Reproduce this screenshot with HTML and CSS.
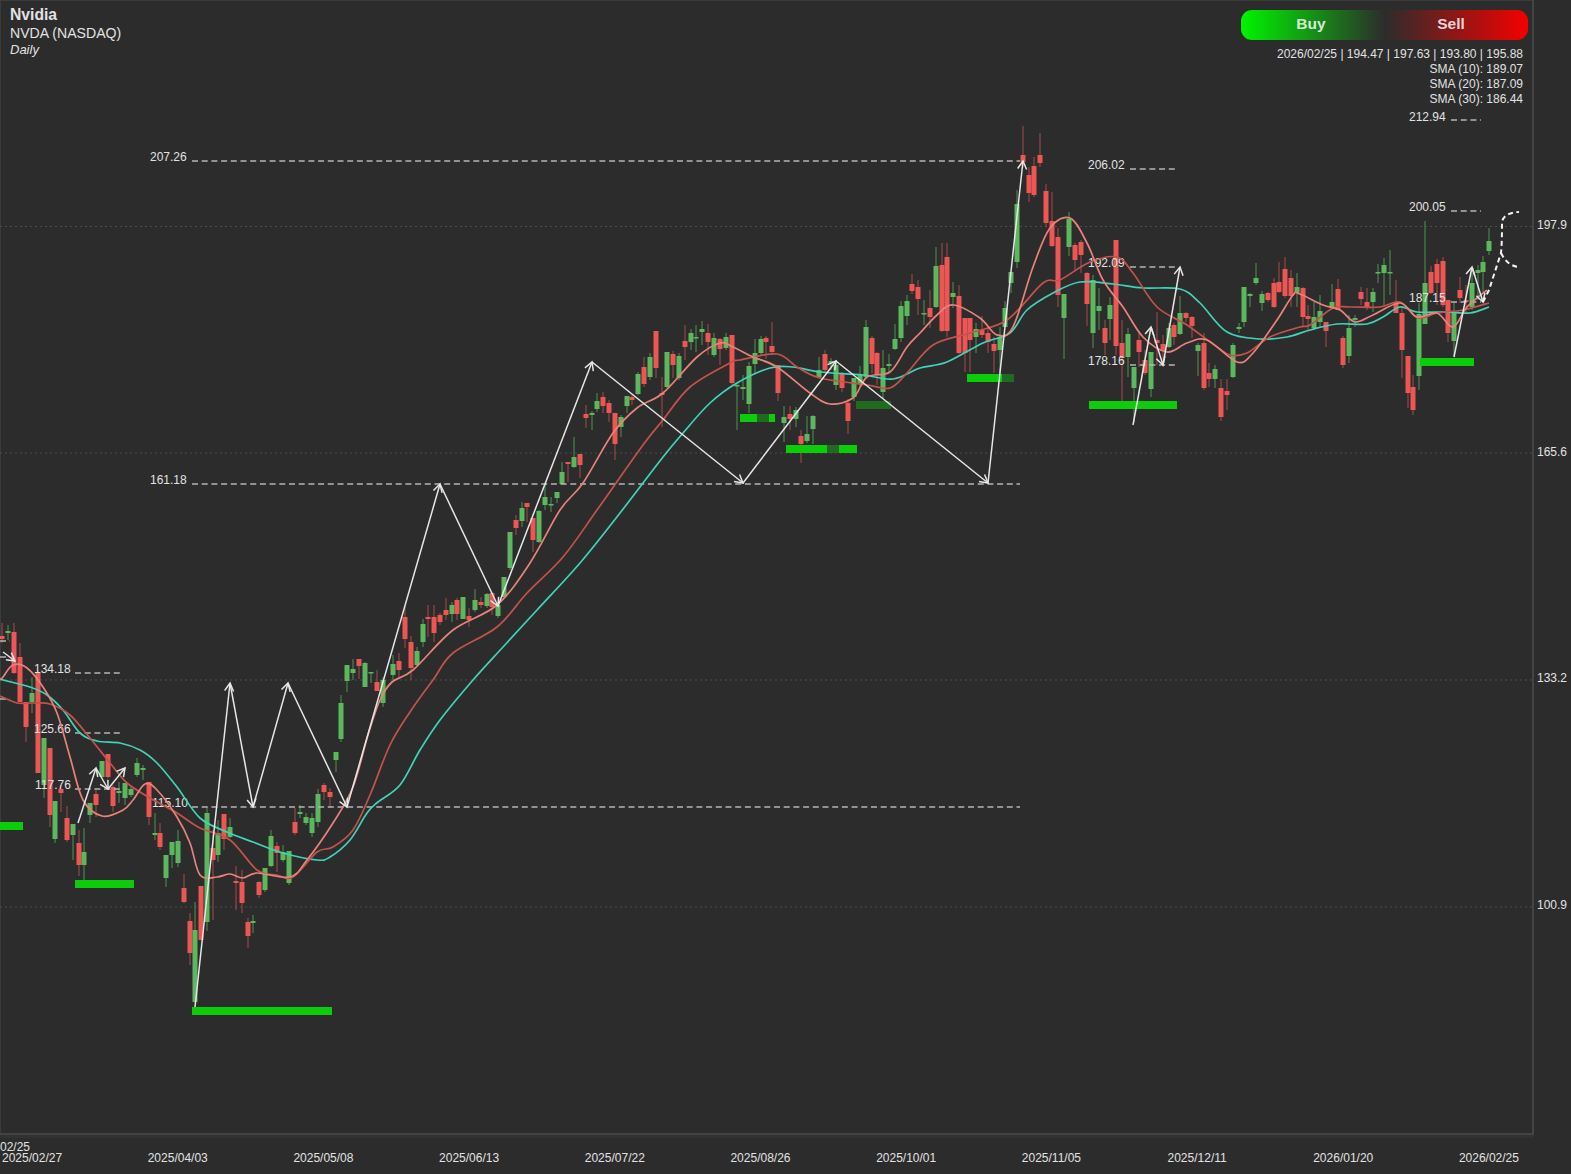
FILE: index.html
```html
<!DOCTYPE html>
<html lang="en">
<head>
<meta charset="utf-8">
<title>Nvidia NVDA Daily</title>
<link rel="stylesheet" href="styles.css">
</head>
<body>
<div class="chart">
  <div class="plot">
    <svg class="canvas" width="1532" height="1133" viewBox="0 0 1532 1133">
      <defs>
        <marker id="head" markerUnits="userSpaceOnUse" markerWidth="14" markerHeight="14" viewBox="-11 -7 14 14" refX="0" refY="0" orient="auto">
          <path class="head" d="M-8 -4.5L0 0L-8 4.5"/>
        </marker>
      </defs>
      <g id="grid">
        <line class="gridline" x1="0" x2="1532" y1="226.5" y2="226.5"/>
        <line class="gridline" x1="0" x2="1532" y1="453" y2="453"/>
        <line class="gridline" x1="0" x2="1532" y1="680" y2="680"/>
        <line class="gridline" x1="0" x2="1532" y1="907" y2="907"/>
      </g>
      <g id="candles"></g>
      <g id="zones">
        <rect class="zone" x="0" y="822" width="23" height="8"/>
        <rect class="zone" x="75" y="880" width="59" height="8"/>
        <rect class="zone" x="192" y="1007" width="140" height="8"/>
        <rect class="zone" x="740" y="414" width="35" height="8"/>
        <rect class="zone-dim" x="757" y="414" width="12" height="8"/>
        <rect class="zone" x="786" y="445" width="71" height="8"/>
        <rect class="zone-dim" x="827" y="445" width="12" height="8"/>
        <rect class="zone-dim" x="856" y="401" width="35" height="8"/>
        <rect class="zone" x="967" y="374" width="47" height="8"/>
        <rect class="zone-dim" x="1002" y="374" width="12" height="8"/>
        <rect class="zone" x="1089" y="401" width="88" height="8"/>
        <rect class="zone" x="1420" y="358" width="54" height="8"/>
      </g>
      <g id="levels">
        <line class="level" x1="192" x2="1020" y1="161" y2="161"/>
        <line class="level" x1="192" x2="1020" y1="484" y2="484"/>
        <line class="level" x1="192" x2="1020" y1="807" y2="807"/>
        <line class="level" x1="75" x2="120" y1="673" y2="673"/>
        <line class="level" x1="75" x2="120" y1="733" y2="733"/>
        <line class="level" x1="75" x2="120" y1="789" y2="789"/>
        <line class="level" x1="1130" x2="1175" y1="169" y2="169"/>
        <line class="level" x1="1130" x2="1175" y1="267" y2="267"/>
        <line class="level" x1="1130" x2="1175" y1="365" y2="365"/>
        <line class="level" x1="1451" x2="1481" y1="120" y2="120"/>
        <line class="level" x1="1451" x2="1481" y1="211" y2="211"/>
        <line class="level" x1="1451" x2="1481" y1="302" y2="302"/>
        <line class="level" x1="0" x2="10" y1="641" y2="641"/>
        <line class="level" x1="0" x2="10" y1="657" y2="657"/>
        <line class="level" x1="0" x2="10" y1="699" y2="699"/>
      </g>
      <g id="labels">
        <text class="lbl" x="150" y="161">207.26</text>
        <text class="lbl" x="150" y="484">161.18</text>
        <text class="lbl" x="152" y="807">115.10</text>
        <text class="lbl" x="34" y="673">134.18</text>
        <text class="lbl" x="34" y="733">125.66</text>
        <text class="lbl" x="35" y="789">117.76</text>
        <text class="lbl" x="1088" y="169">206.02</text>
        <text class="lbl" x="1088" y="267">192.09</text>
        <text class="lbl" x="1088" y="365">178.16</text>
        <text class="lbl" x="1409" y="121">212.94</text>
        <text class="lbl" x="1409" y="211">200.05</text>
        <text class="lbl" x="1409" y="302">187.15</text>
      </g>
      <g id="smas"></g>
      <g id="arrows"></g>
      <path class="forecast" d="M1483 302L1489 290L1501 253C1502 243 1502 232 1502 222C1503 216 1510 212 1519 212"/>
      <path class="forecast" d="M1501 253C1505 261 1510 266 1519 267"/>
    </svg>
    <div class="title">
      <div class="name">Nvidia</div>
      <div class="ticker">NVDA (NASDAQ)</div>
      <div class="period">Daily</div>
    </div>
    <div class="hud">
      <div class="trade">
        <span class="side">Buy</span>
        <span class="side sell">Sell</span>
      </div>
      <div class="quote">
        <div>2026/02/25 | 194.47 | 197.63 | 193.80 | 195.88</div>
        <div>SMA (10): 189.07</div>
        <div>SMA (20): 187.09</div>
        <div>SMA (30): 186.44</div>
      </div>
    </div>
  </div>
  <div class="axis-y">
    <span>197.9</span>
    <span>165.6</span>
    <span>133.2</span>
    <span>100.9</span>
  </div>
  <div class="axis-x">
    <span class="stray">02/25</span>
    <span>2025/02/27</span>
    <span>2025/04/03</span>
    <span>2025/05/08</span>
    <span>2025/06/13</span>
    <span>2025/07/22</span>
    <span>2025/08/26</span>
    <span>2025/10/01</span>
    <span>2025/11/05</span>
    <span>2025/12/11</span>
    <span>2026/01/20</span>
    <span>2026/02/25</span>
  </div>
</div>
<script src="script.js"></script>
</body>
</html>
```

FILE: styles.css
```css
* { box-sizing: border-box; }
html, body { margin: 0; padding: 0; }
body {
  background: #2c2c2c;
  color: #e2e2e2;
  font-family: "Liberation Sans", Arial, sans-serif;
  font-size: 12px;
  width: 1571px;
  height: 1174px;
  overflow: hidden;
}
.chart {
  display: grid;
  grid-template-columns: 1534px 37px;
  grid-template-rows: 1135px 39px;
  width: 1571px;
  height: 1174px;
}
.plot {
  position: relative;
  overflow: hidden;
  border-right: 2px solid #444;
  border-bottom: 2px solid #434343;
  box-shadow: inset 1px 1px 0 #3c3c3c, 0 3px 0 #323232;
}
.canvas { display: block; }

.gridline { stroke: #4c4c4c; stroke-width: 1; stroke-dasharray: 2 3; }
.zone { fill: #0ccc0c; }
.zone-dim { fill: #1f6b1f; }
.level { stroke: #b4b4b4; stroke-width: 1.4; stroke-dasharray: 6 3.7; }
.lbl { fill: #e2e2e2; font-size: 12px; }
.wick { stroke-width: 1; }
.wick.up { stroke: #4f9352; }
.wick.down { stroke: #a84b4b; }
.body.up { fill: #5cb85f; }
.body.down { fill: #ee5555; }
.sma { fill: none; stroke-width: 1.7; }
.sma.s10 { stroke: #e8837b; }
.sma.s20 { stroke: #c4524c; }
.sma.s30 { stroke: #3fd4ba; }
.arrow { stroke: #e6e6e6; stroke-width: 1.5; marker-end: url(#head); }
.head { fill: none; stroke: #e6e6e6; stroke-width: 1.5; }
.forecast { fill: none; stroke: #f2f2f2; stroke-width: 2; stroke-dasharray: 5 3.5; }

.title {
  position: absolute;
  left: 10px;
  top: 5px;
}
.name { font-size: 15.7px; font-weight: bold; line-height: 19px; }
.ticker { font-size: 14.1px; line-height: 18px; }
.period { font-size: 13px; font-style: italic; line-height: 15px; }

.hud {
  position: absolute;
  top: 10px;
  right: 4px;
  display: flex;
  flex-direction: column;
  align-items: flex-end;
  gap: 7px;
}
.trade {
  display: flex;
  width: 287px;
  height: 30px;
  border-radius: 11px;
  background: linear-gradient(90deg, #00f500 0%, #2c2c2c 50%, #f50000 100%);
}
.side {
  flex: 1;
  text-align: center;
  font-size: 15.5px;
  font-weight: bold;
  line-height: 28px;
  color: rgba(255, 255, 255, 0.84);
}
.side.sell { padding-right: 7px; }
.quote {
  padding-right: 5px;
  text-align: right;
  line-height: 15px;
}

.axis-y {
  display: flex;
  flex-direction: column;
  gap: 212.6px;
  padding: 218px 0 0 3px;
  font-size: 12px;
  line-height: 14px;
}
.axis-x {
  grid-column: 1 / -1;
  position: relative;
  display: flex;
  gap: 85.7px;
  padding: 16px 0 0 2px;
  line-height: 14px;
}
.axis-x span { flex: none; width: 60px; white-space: nowrap; }
.axis-x .stray { position: absolute; left: 0; top: 5px; }
```

FILE: script.js
```js
// x, high, body top, body bottom, low, 1 = up / 0 = down (pixel coordinates of the plot)
const candles = [
[2,623,636,639,643,0],[8,625,631,633,640,1],[14,623,632,673,674,0],[20,643,657,702,702,0],[26,702,702,727,742,0],[32,677,693,702,713,1],[38,670,672,773,773,0],[44,738,738,785,798,1],[50,748,748,815,827,0],[55,801,801,839,843,1],[61,785,789,793,812,0],[67,806,818,840,842,0],[73,824,824,835,860,1],[79,830,843,865,876,0],[84,828,852,865,880,1],[90,803,803,815,823,1],[96,790,794,805,817,0],[102,761,761,777,778,1],[108,754,754,777,778,0],[113,785,787,806,812,0],[119,782,791,793,803,1],[125,783,783,798,805,1],[131,787,789,795,797,1],[137,758,763,775,777,1],[143,765,768,770,780,1],[149,782,782,817,825,0],[155,813,833,835,840,1],[160,823,833,847,850,0],[166,855,855,878,887,1],[172,842,842,855,868,1],[178,830,841,863,867,1],[184,874,888,902,903,0],[190,913,921,953,965,0],[195,902,930,1002,1003,1],[201,886,886,940,940,0],[207,807,813,922,931,1],[213,830,848,860,920,0],[218,820,833,855,862,1],[224,814,814,839,850,0],[230,818,827,837,838,1],[236,866,881,883,910,0],[242,870,882,903,913,0],[248,918,922,936,948,0],[253,915,921,923,933,1],[259,881,882,895,898,0],[265,868,868,890,892,1],[271,830,836,866,867,1],[277,842,846,853,872,0],[283,845,852,860,862,1],[289,851,851,883,885,1],[295,808,822,833,835,0],[300,805,812,814,818,1],[306,813,817,823,825,1],[312,813,818,833,837,1],[318,789,794,822,827,1],[324,783,785,792,800,0],[330,788,792,797,807,0],[336,752,752,760,772,1],[341,695,703,739,742,1],[347,665,665,681,692,1],[353,659,669,673,680,1],[359,659,659,666,679,0],[365,662,663,687,687,1],[371,672,672,673,683,1],[377,670,682,691,691,0],[383,677,680,703,707,1],
[393,655,664,675,680,1],[399,653,661,670,677,0],[405,607,617,639,648,0],[411,636,642,668,680,0],[417,647,651,665,667,1],[423,619,624,642,647,1],[428,605,617,619,637,0],[434,605,617,633,642,0],[440,613,615,622,625,0],[446,598,610,615,620,0],[452,602,605,614,622,1],[457,598,600,614,620,0],[463,597,597,619,619,1],[469,608,616,620,627,0],[475,589,600,610,612,1],[481,597,602,605,608,0],[487,593,594,606,608,1],[492,592,593,607,615,0],[498,602,605,616,618,1],[504,577,577,597,598,1],[510,532,532,568,570,1],[516,515,520,528,535,0],[522,502,508,521,527,1],[527,503,503,507,522,0],[533,518,518,540,552,0],[539,510,511,542,543,1],[545,483,497,505,510,1],[551,497,504,505,512,1],[557,492,492,498,503,1],[562,462,472,484,485,1],[568,462,462,464,482,0],[574,437,457,467,468,1],[580,454,454,465,478,0],[586,405,414,418,428,0],[592,411,413,415,430,1],[597,393,401,409,412,1],[603,392,397,406,413,0],[609,400,403,413,422,0],[615,413,413,444,460,0],[621,415,417,427,437,1],[627,396,396,406,413,1],[632,395,397,400,405,0],[638,372,374,394,395,1],[644,357,367,384,387,0],[650,353,357,377,380,1],[656,331,331,368,378,0],[662,377,393,395,427,0],[667,352,352,387,388,1],[673,351,354,365,378,0],[679,353,356,378,380,1],[685,325,341,347,360,0],[691,329,333,342,350,1],[696,325,337,338,352,1],[702,321,329,332,345,1],[708,324,333,342,355,0],[714,333,338,355,357,1],[720,338,339,349,365,0],[726,333,337,348,350,1],[732,335,335,383,385,0],[737,383,385,386,430,1],[743,375,387,389,400,1],[749,362,366,404,413,1],[755,339,353,364,373,1],[761,336,339,353,355,1],[766,336,338,342,359,0],[772,322,346,352,354,0],[778,365,365,393,401,0],[784,406,417,423,442,1],[790,406,414,419,430,0],[796,407,410,419,427,1],[801,430,436,444,463,0],[807,416,434,441,443,1],[813,415,416,429,444,1],[819,357,370,377,377,1],[825,350,354,370,372,0],[831,358,361,363,370,1],[836,360,365,385,390,1],[842,372,373,388,392,0],[848,399,403,421,434,0],[854,378,378,397,401,1],[860,366,374,384,387,1],[866,320,327,377,378,1],[872,336,338,364,373,0],[877,352,353,375,385,0],[883,350,368,392,398,1],[889,354,364,366,373,1],[895,324,339,349,350,1],[901,301,306,338,342,1],[907,295,301,316,325,1],[912,274,284,291,294,0],[918,280,287,299,315,0],[924,300,313,314,325,1],[930,290,308,317,328,0],[936,247,266,307,308,1],[942,243,265,331,332,0],[947,243,257,331,337,0],[953,282,293,297,308,1],[959,285,296,353,354,0],[965,318,318,353,372,0],[970,318,318,340,372,0],[976,323,329,337,353,1],[982,316,330,335,338,0],[988,327,333,342,353,0],[994,337,344,351,373,0],[1000,327,337,350,373,1],[1005,301,308,327,327,1],[1011,272,272,283,293,1],[1017,190,204,262,268,1],[1023,126,155,162,168,0],[1029,167,175,193,202,0],[1034,157,166,195,197,0],[1040,133,155,163,167,0],[1046,184,191,223,227,0],[1052,192,221,246,247,0],[1058,228,237,295,307,0],[1064,294,294,318,359,1],[1069,212,219,247,256,1],[1075,243,245,260,270,0],[1081,240,242,255,273,0],[1087,272,273,304,326,0],[1093,275,280,333,348,1],[1099,288,306,311,330,1],[1105,320,328,343,355,0],[1110,297,305,319,340,1],[1116,240,240,346,355,0],[1122,320,343,358,402,0],[1128,328,334,357,377,1],[1134,367,367,388,423,1],[1139,332,340,352,367,0],[1145,350,360,373,375,0],[1151,352,352,389,397,1],[1157,312,340,343,365,0],[1163,335,344,351,367,0],[1169,323,328,347,348,1],[1174,323,325,337,345,0],[1180,296,313,334,335,1],[1186,312,313,318,322,0],[1192,316,317,326,338,0],[1198,343,345,351,376,1],[1204,333,343,388,390,0],[1209,363,373,379,387,0],[1215,365,369,379,388,1],[1221,379,388,417,421,0],[1227,379,391,395,410,0],[1233,343,345,377,378,1],[1239,323,327,329,333,1],[1244,287,287,322,327,1],[1250,293,294,296,307,1],[1256,263,278,283,285,1],[1262,291,294,303,311,1],[1268,292,293,300,302,0],[1274,278,283,307,308,0],[1279,262,282,292,293,0],[1285,257,269,296,298,0],[1291,270,278,296,307,0],[1297,273,287,293,307,1],[1303,287,288,317,326,0],[1308,305,316,319,330,0],[1314,302,317,328,330,1],[1320,295,311,322,327,1],[1326,322,322,331,347,0],[1332,284,302,307,307,1],[1338,279,289,310,310,0],[1343,336,338,365,368,0],[1349,315,328,356,363,1],[1355,315,318,320,327,1],[1361,287,292,299,305,0],[1367,288,302,308,310,0],[1373,288,292,302,312,1],[1378,264,272,273,283,1],[1384,258,265,273,305,1],[1390,250,272,273,295,1],[1396,280,302,313,313,0],[1402,307,313,350,378,0],[1408,356,356,393,408,0],[1413,375,387,410,415,0],[1419,303,314,376,390,1],[1425,221,283,324,324,1],[1431,266,272,293,294,0],[1437,259,264,283,305,0],[1443,257,261,305,307,0],[1448,300,300,333,342,0],[1454,302,312,341,357,1],[1460,277,290,298,303,0],[1466,285,300,302,312,0],[1472,268,283,307,310,1],[1478,265,270,273,300,1],[1483,256,262,272,293,1],[1489,228,241,251,255,1]
];

const sma10 = [[0,680],[3,677],[13,665],[27,668],[43,687],[57,713],[70,757],[83,800],[102,816],[123,810],[133,800],[145,784],[157,790],[177,817],[190,843],[200,875],[217,877],[230,874],[243,878],[257,873],[290,877],[307,860],[333,823],[353,787],[368,735],[380,700],[392,682],[413,670],[453,630],[497,605],[530,563],[560,510],[583,483],[613,433],[637,408],[663,393],[697,357],[720,343],[733,347],[753,357],[777,367],[810,393],[830,404],[853,398],[867,377],[890,372],[907,347],[920,333],[937,315],[953,305],[980,318],[997,335],[1013,327],[1033,267],[1050,228],[1070,218],[1087,243],[1103,280],[1123,307],[1143,337],[1167,352],[1187,343],[1207,340],[1237,362],[1253,353],[1277,320],[1293,295],[1300,294],[1323,305],[1340,310],[1355,322],[1373,315],[1400,303],[1417,317],[1437,313],[1453,327],[1467,307],[1487,290]];
const sma20 = [[0,696],[17,703],[33,703],[50,704],[70,715],[90,738],[110,763],[127,783],[150,798],[177,813],[200,828],[230,840],[257,870],[277,875],[293,877],[317,852],[333,847],[353,830],[370,795],[390,745],[410,712],[433,680],[453,653],[497,627],[527,593],[563,557],[597,510],[643,445],[663,420],[690,387],[730,363],[740,360],[777,354],[797,367],[820,378],[867,385],[890,388],[907,373],[933,345],[970,333],[1007,320],[1043,283],[1060,280],[1090,262],[1117,257],[1133,273],[1157,307],[1187,325],[1217,347],[1230,355],[1247,353],[1270,337],[1300,327],[1310,325],[1333,308],[1350,307],[1380,307],[1400,302],[1418,318],[1437,313],[1463,310],[1489,303]];
const sma30 = [[0,679],[3,680],[30,687],[47,695],[63,710],[80,733],[97,741],[120,743],[140,750],[157,763],[177,787],[200,818],[227,832],[253,842],[283,853],[317,860],[330,857],[350,840],[367,813],[378,802],[400,785],[420,750],[440,720],[473,680],[503,647],[537,610],[580,563],[620,513],[663,457],[683,433],[710,403],[737,383],[770,368],[793,367],[820,372],[863,375],[893,379],[920,368],[947,362],[983,343],[1010,333],[1027,310],[1053,293],[1080,282],[1113,284],[1143,288],[1180,289],[1200,303],[1227,332],[1260,339],[1287,337],[1310,330],[1337,324],[1367,324],[1383,317],[1400,307],[1417,312],[1447,312],[1470,313],[1489,307]];

// Zigzag runs of arrows
const zigzags = [
  [[195,1007],[230,683],[253,807],[288,683],[347,807],[440,484],[498,606],[592,362],[743,483],[836,361],[988,483],[1023,161]],
  [[78,823],[96,768],[108,789],[125,768]],
  [[1133,425],[1151,327],[1163,365],[1180,267]],
  [[1454,357],[1472,267],[1483,302]],
  [[3,652],[15,661]]
];

function smooth(pts) {
  let d = "M" + pts[0][0] + " " + pts[0][1];
  for (let i = 0; i < pts.length - 1; i++) {
    const p0 = pts[Math.max(i - 1, 0)], p1 = pts[i], p2 = pts[i + 1], p3 = pts[Math.min(i + 2, pts.length - 1)];
    const c1x = p1[0] + (p2[0] - p0[0]) / 6, c1y = p1[1] + (p2[1] - p0[1]) / 6;
    const c2x = p2[0] - (p3[0] - p1[0]) / 6, c2y = p2[1] - (p3[1] - p1[1]) / 6;
    d += "C" + c1x.toFixed(1) + " " + c1y.toFixed(1) + " " + c2x.toFixed(1) + " " + c2y.toFixed(1) + " " + p2[0] + " " + p2[1];
  }
  return d;
}

document.getElementById("candles").innerHTML = candles.map(function (c) {
  const cls = c[5] ? "up" : "down";
  return '<line class="wick ' + cls + '" x1="' + c[0] + '" x2="' + c[0] + '" y1="' + c[1] + '" y2="' + c[4] + '"/>' +
    '<rect class="body ' + cls + '" x="' + (c[0] - 2.5) + '" y="' + c[2] + '" width="5" height="' + Math.max(c[3] - c[2], 1.5) + '"/>';
}).join("");

document.getElementById("smas").innerHTML =
  '<path class="sma s30" d="' + smooth(sma30) + '"/>' +
  '<path class="sma s20" d="' + smooth(sma20) + '"/>' +
  '<path class="sma s10" d="' + smooth(sma10) + '"/>';

document.getElementById("arrows").innerHTML = zigzags.map(function (z) {
  let out = "";
  for (let i = 0; i < z.length - 1; i++) {
    out += '<line class="arrow" x1="' + z[i][0] + '" y1="' + z[i][1] + '" x2="' + z[i + 1][0] + '" y2="' + z[i + 1][1] + '"/>';
  }
  return out;
}).join("");
```
